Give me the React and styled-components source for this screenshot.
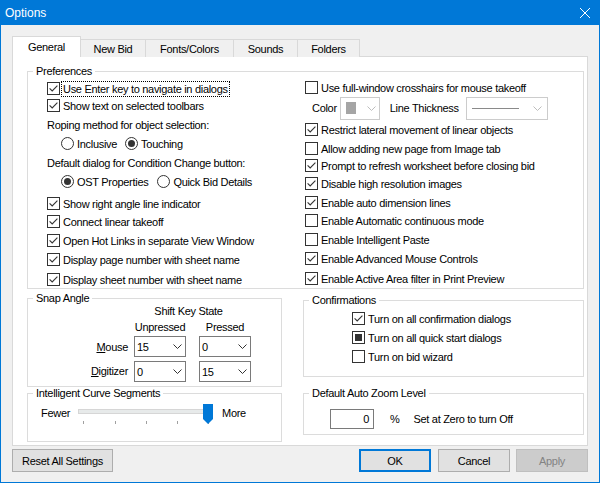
import React from "react";
import styled, { createGlobalStyle } from "styled-components";

const GlobalStyle = createGlobalStyle`
  html, body {
    margin: 0;
    padding: 0;
    background: #f0f0f0;
  }
  body {
    font-family: "Liberation Sans", Arial, sans-serif;
    font-size: 11px;
    letter-spacing: -0.3px;
    color: #000;
  }
  * {
    box-sizing: border-box;
  }
`;

const Window = styled.div`
  width: 600px;
  height: 483px;
  border: 1px solid #0078d7;
  background: #f0f0f0;
  display: flex;
  flex-direction: column;
`;

const TitleBar = styled.div`
  height: 24px;
  background: #0078d7;
  color: #fff;
  display: flex;
  align-items: center;
  padding-left: 4px;
  font-size: 12px;
  letter-spacing: 0;
`;

const CloseIcon = styled.svg`
  margin-left: auto;
  margin-right: 9px;
`;

const Body = styled.div`
  padding: 11px 11px 0 11px;
  display: flex;
  flex-direction: column;
`;

const TabStrip = styled.div`
  display: flex;
  align-items: flex-end;
  height: 21px;
  position: relative;
  z-index: 1;
`;

const Tab = styled.div`
  width: ${(p) => p.$w}px;
  height: ${(p) => (p.$active ? 21 : 18)}px;
  border: 1px solid #d9d9d9;
  border-bottom: none;
  background: ${(p) => (p.$active ? "#fff" : "#f0f0f0")};
  display: flex;
  align-items: center;
  justify-content: center;
  position: relative;
  z-index: ${(p) => (p.$active ? 2 : 1)};
  & + & {
    margin-left: -1px;
  }
`;

const Panel = styled.div`
  margin-top: -1px;
  width: 576px;
  height: 390px;
  background: #fff;
  border: 1px solid #d9d9d9;
  padding: 14px 3px 0 14px;
  display: flex;
  flex-direction: column;
`;

const Group = styled.div`
  position: relative;
  border: 1px solid #dcdcdc;
  height: ${(p) => p.$h}px;
  margin-top: ${(p) => p.$mt || 0}px;
`;

const GroupLabel = styled.span`
  position: absolute;
  top: -7px;
  left: 5px;
  padding: 0 3px;
  background: #fff;
  line-height: 13px;
`;

const PrefsGrid = styled.div`
  display: grid;
  grid-template-columns: 277px 1fr;
  padding-top: 7px;
`;

const Column = styled.div`
  display: flex;
  flex-direction: column;
  padding-left: ${(p) => p.$pl || 0}px;
`;

const Row = styled.div`
  display: flex;
  align-items: center;
  height: ${(p) => p.$h || 17}px;
  margin-top: ${(p) => p.$mt || 0}px;
  padding-left: ${(p) => p.$pl || 0}px;
  white-space: nowrap;
`;

const Text = styled.span`
  margin-left: ${(p) => p.$ml || 0}px;
  white-space: nowrap;
`;

const Focus = styled.span`
  margin-left: 2px;
  padding: 0 1px;
  outline: 1px dotted #000;
  line-height: 14px;
`;

const RadioItem = styled.span`
  display: inline-flex;
  align-items: center;
  margin-right: ${(p) => p.$mr || 0}px;
`;

const Lower = styled.div`
  display: flex;
  gap: 21px;
`;

const LeftStack = styled.div`
  width: 255px;
  display: flex;
  flex-direction: column;
`;

const RightStack = styled.div`
  width: 281px;
  display: flex;
  flex-direction: column;
`;

const Combo = styled.div`
  width: ${(p) => p.$w}px;
  height: ${(p) => p.$h}px;
  margin-left: ${(p) => p.$ml || 0}px;
  border: 1px solid ${(p) => (p.$disabled ? "#cccccc" : "#7a7a7a")};
  background: #fff;
  display: flex;
  align-items: center;
  flex-shrink: 0;
  padding-left: ${(p) => p.$pl || 2}px;
`;

const Chevron = styled.svg`
  margin-left: auto;
  margin-right: ${(p) => p.$mr || 3}px;
`;

const Swatch = styled.span`
  width: 10px;
  height: 12px;
  margin-left: 3px;
  background: #a5a5a5;
`;

const ThickLine = styled.span`
  width: 47px;
  height: 1px;
  margin-left: 2px;
  background: #8a8a8a;
`;

const SnapGrid = styled.div`
  display: grid;
  grid-template-columns: 106px 65px 52px;
  grid-template-rows: 14px 17px 22px 25px;
  align-items: end;
  padding-top: 5px;
`;

const SnapTitle = styled.div`
  grid-column: 2 / 4;
  text-align: center;
  padding-right: 8px;
  line-height: 14px;
`;

const SnapHead = styled.div`
  width: 52px;
  text-align: center;
  line-height: 14px;
  margin-bottom: 1px;
`;

const SnapLabel = styled.div`
  text-align: right;
  padding-right: 6px;
  align-self: center;
  padding-top: 2px;
  & u {
    text-decoration: underline;
  }
`;

const SliderRow = styled.div`
  display: flex;
  align-items: center;
  padding: 7px 0 0 13px;
`;

const SliderSvg = styled.svg`
  margin-left: 6px;
  margin-right: 7px;
`;

const ConfirmBody = styled.div`
  display: flex;
  flex-direction: column;
  padding: 9px 0 0 48px;
`;

const ZoomRow = styled.div`
  display: flex;
  align-items: center;
  padding: 15px 0 0 26px;
`;

const TextBox = styled.div`
  width: 44px;
  height: 20px;
  border: 1px solid #7a7a7a;
  background: #fff;
  display: flex;
  align-items: center;
  justify-content: flex-end;
  padding-right: 4px;
`;

const ButtonRow = styled.div`
  display: flex;
  margin-top: 3px;
`;

const Button = styled.div`
  width: ${(p) => p.$w}px;
  height: 23px;
  margin-left: ${(p) => p.$ml || 0}px;
  background: ${(p) => (p.$disabled ? "#cccccc" : "#e1e1e1")};
  border: 1px solid
    ${(p) => (p.$default ? "#0078d7" : p.$disabled ? "#bfbfbf" : "#adadad")};
  box-shadow: ${(p) => (p.$default ? "inset 0 0 0 1px #0078d7" : "none")};
  color: ${(p) => (p.$disabled ? "#838383" : "#000")};
  display: flex;
  align-items: center;
  justify-content: center;
`;

const Spacer = styled.div`
  flex: 1;
`;

const CheckBox = ({ state }) => (
  <svg width="13" height="13" viewBox="0 0 13 13" style={{ flexShrink: 0 }}>
    <rect x="0.5" y="0.5" width="12" height="12" fill="#fff" stroke="#333" />
    {state === "on" && (
      <path d="M2.6 6.4 L5.2 9 L10.4 3.6" fill="none" stroke="#333" strokeWidth="1.1" />
    )}
    {state === "mixed" && <rect x="3" y="3" width="7" height="7" fill="#333" />}
  </svg>
);

const Radio = ({ on }) => (
  <svg width="13" height="13" viewBox="0 0 13 13" style={{ flexShrink: 0 }}>
    <circle cx="6.5" cy="6.5" r="6" fill="#fff" stroke="#333" />
    {on && <circle cx="6.5" cy="6.5" r="3.5" fill="#333" />}
  </svg>
);

const Check = ({ state, mt, children }) => (
  <Row $mt={mt}>
    <CheckBox state={state} />
    <Text $ml={3}>{children}</Text>
  </Row>
);

const Down = ({ color = "#333", mr }) => (
  <Chevron width="9" height="5" viewBox="0 0 9 5" $mr={mr}>
    <path d="M0.5 0.5 L4.5 4.5 L8.5 0.5" fill="none" stroke={color} strokeWidth="1" />
  </Chevron>
);

const tabs = [
  { label: "General", w: 69, active: true },
  { label: "New Bid", w: 66 },
  { label: "Fonts/Colors", w: 89 },
  { label: "Sounds", w: 65 },
  { label: "Folders", w: 63 },
];

const leftChecks = [
  { text: "Show right angle line indicator", mt: 5 },
  { text: "Connect linear takeoff", mt: 1 },
  { text: "Open Hot Links in separate View Window", mt: 2 },
  { text: "Display page number with sheet name", mt: 2 },
  { text: "Display sheet number with sheet name", mt: 3 },
];

const rightChecks = [
  { text: "Restrict lateral movement of linear objects", state: "on", mt: 2 },
  { text: "Allow adding new page from Image tab", state: "off", mt: 2 },
  { text: "Prompt to refresh worksheet before closing bid", state: "on", mt: 0 },
  { text: "Disable high resolution images", state: "on", mt: 1 },
  { text: "Enable auto dimension lines", state: "on", mt: 2 },
  { text: "Enable Automatic continuous mode", state: "off", mt: 1 },
  { text: "Enable Intelligent Paste", state: "off", mt: 2 },
  { text: "Enable Advanced Mouse Controls", state: "on", mt: 2 },
  { text: "Enable Active Area filter in Print Preview", state: "on", mt: 3 },
];

const ticks = [7, 39, 70, 101, 132];

const App = () => (
  <>
    <GlobalStyle />
    <Window>
      <TitleBar>
        Options
        <CloseIcon width="10" height="10" viewBox="0 0 10 10">
          <path d="M0 0 L10 10 M10 0 L0 10" stroke="#fff" strokeWidth="1" />
        </CloseIcon>
      </TitleBar>
      <Body>
        <TabStrip>
          {tabs.map((t) => (
            <Tab key={t.label} $w={t.w} $active={t.active}>
              {t.label}
            </Tab>
          ))}
        </TabStrip>
        <Panel>
          <Group $h={218}>
            <GroupLabel>Preferences</GroupLabel>
            <PrefsGrid>
              <Column $pl={19}>
                <Row $mt={1}>
                  <CheckBox state="on" />
                  <Focus>Use Enter key to navigate in dialogs</Focus>
                </Row>
                <Check state="on">Show text on selected toolbars</Check>
                <Row $mt={2}>Roping method for object selection:</Row>
                <Row $mt={2} $pl={14}>
                  <RadioItem $mr={8}>
                    <Radio />
                    <Text $ml={3}>Inclusive</Text>
                  </RadioItem>
                  <RadioItem>
                    <Radio on />
                    <Text $ml={3}>Touching</Text>
                  </RadioItem>
                </Row>
                <Row $mt={2}>Default dialog for Condition Change button:</Row>
                <Row $mt={2} $pl={14}>
                  <RadioItem $mr={9}>
                    <Radio on />
                    <Text $ml={3}>OST Properties</Text>
                  </RadioItem>
                  <RadioItem>
                    <Radio />
                    <Text $ml={3}>Quick Bid Details</Text>
                  </RadioItem>
                </Row>
                {leftChecks.map((c) => (
                  <Check key={c.text} state="on" mt={c.mt}>
                    {c.text}
                  </Check>
                ))}
              </Column>
              <Column>
                <Check state="off">Use full-window crosshairs for mouse takeoff</Check>
                <Row $h={22} $mt={1} $pl={7}>
                  Color
                  <Combo $w={40} $h={23} $ml={3} $disabled>
                    <Swatch />
                    <Down color="#bdbdbd" mr={3} />
                  </Combo>
                  <Text $ml={10}>Line Thickness</Text>
                  <Combo $w={82} $h={23} $ml={7} $disabled $pl={3}>
                    <ThickLine />
                    <Down color="#bdbdbd" mr={5} />
                  </Combo>
                </Row>
                {rightChecks.map((c) => (
                  <Check key={c.text} state={c.state} mt={c.mt}>
                    {c.text}
                  </Check>
                ))}
              </Column>
            </PrefsGrid>
          </Group>
          <Lower>
            <LeftStack>
              <Group $h={89} $mt={9}>
                <GroupLabel>Snap Angle</GroupLabel>
                <SnapGrid>
                  <SnapTitle>Shift Key State</SnapTitle>
                  <div />
                  <SnapHead>Unpressed</SnapHead>
                  <SnapHead>Pressed</SnapHead>
                  <SnapLabel>
                    <u>M</u>ouse
                  </SnapLabel>
                  <Combo $w={52} $h={21} $pl={2}>
                    15
                    <Down />
                  </Combo>
                  <Combo $w={52} $h={21} $pl={2}>
                    0
                    <Down />
                  </Combo>
                  <SnapLabel>
                    <u>D</u>igitizer
                  </SnapLabel>
                  <Combo $w={52} $h={21} $pl={2}>
                    0
                    <Down />
                  </Combo>
                  <Combo $w={52} $h={21} $pl={2}>
                    15
                    <Down />
                  </Combo>
                </SnapGrid>
              </Group>
              <Group $h={49} $mt={6}>
                <GroupLabel>Intelligent Curve Segments</GroupLabel>
                <SliderRow>
                  Fewer
                  <SliderSvg width="139" height="24" viewBox="0 0 139 24">
                    <rect x="2.5" y="8.5" width="130" height="4" fill="#e7eaea" stroke="#d6d6d6" />
                    {ticks.map((x) => (
                      <line key={x} x1={x + 0.5} y1="20" x2={x + 0.5} y2="23" stroke="#a0a0a0" />
                    ))}
                    <path d="M127 3 H137 V18 L132 23 L127 18 Z" fill="#0078d7" />
                  </SliderSvg>
                  More
                </SliderRow>
              </Group>
            </LeftStack>
            <RightStack>
              <Group $h={77} $mt={11}>
                <GroupLabel>Confirmations</GroupLabel>
                <ConfirmBody>
                  <Check state="on">Turn on all confirmation dialogs</Check>
                  <Check state="mixed" mt={2}>
                    Turn on all quick start dialogs
                  </Check>
                  <Check state="off" mt={2}>
                    Turn on bid wizard
                  </Check>
                </ConfirmBody>
              </Group>
              <Group $h={42} $mt={16}>
                <GroupLabel>Default Auto Zoom Level</GroupLabel>
                <ZoomRow>
                  <TextBox>0</TextBox>
                  <Text $ml={16}>%</Text>
                  <Text $ml={14}>Set at Zero to turn Off</Text>
                </ZoomRow>
              </Group>
            </RightStack>
          </Lower>
        </Panel>
        <ButtonRow>
          <Button $w={101}>Reset All Settings</Button>
          <Spacer />
          <Button $w={72} $default>
            OK
          </Button>
          <Button $w={72} $ml={7}>
            Cancel
          </Button>
          <Button $w={72} $ml={6} $disabled>
            Apply
          </Button>
        </ButtonRow>
      </Body>
    </Window>
  </>
);

export default App;
